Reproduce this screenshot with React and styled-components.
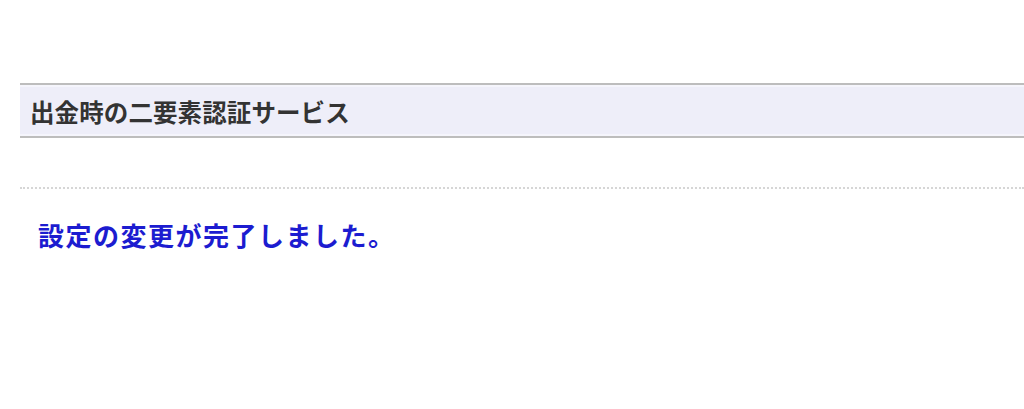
import React from 'react';
import styled, { createGlobalStyle } from 'styled-components';

const GlobalStyle = createGlobalStyle`
    html, body {
        margin: 0;
        padding: 0;
        background: #ffffff;
    }
    body {
        font-family: "Noto Sans CJK JP", "Noto Sans", sans-serif;
    }
`

const App = () => {
    return (
        <Page>
            <GlobalStyle />
            <SectionHeader>
                <HeaderTitle>出金時の二要素認証サービス</HeaderTitle>
            </SectionHeader>
            <Body>
                <DottedRule />
                <Message>設定の変更が完了しました。</Message>
            </Body>
        </Page>
    )
}

export default App;


const Page = styled.div`
    width: 1024px;
    height: 409px;
    padding: 83px 0 0 20px;
    box-sizing: border-box;
    overflow: hidden;
`

const SectionHeader = styled.div`
    display: flex;
    align-items: center;
    height: 51px;
    padding-left: 10px;
    background: #eeeef9;
    border-top: 2px solid #bdbdbd;
    border-bottom: 2px solid #bdbdbd;
    box-shadow: inset 0 2px 0 #f5f5fc, inset 0 -2px 0 #f5f5fc;
`

const HeaderTitle = styled.h2`
    margin: 4px 0 0 0;
    font-size: 24.5px;
    font-weight: 700;
    line-height: 1;
    letter-spacing: 0.1px;
    color: #333333;
`

const Body = styled.div`
    padding-top: 49px;
`

const DottedRule = styled.div`
    border-top: 2px dotted #d6d6d6;
`

const Message = styled.p`
    margin: 33px 0 0 18px;
    font-size: 26px;
    font-weight: 700;
    line-height: 1;
    letter-spacing: 1.5px;
    color: #1c1cd0;
`
